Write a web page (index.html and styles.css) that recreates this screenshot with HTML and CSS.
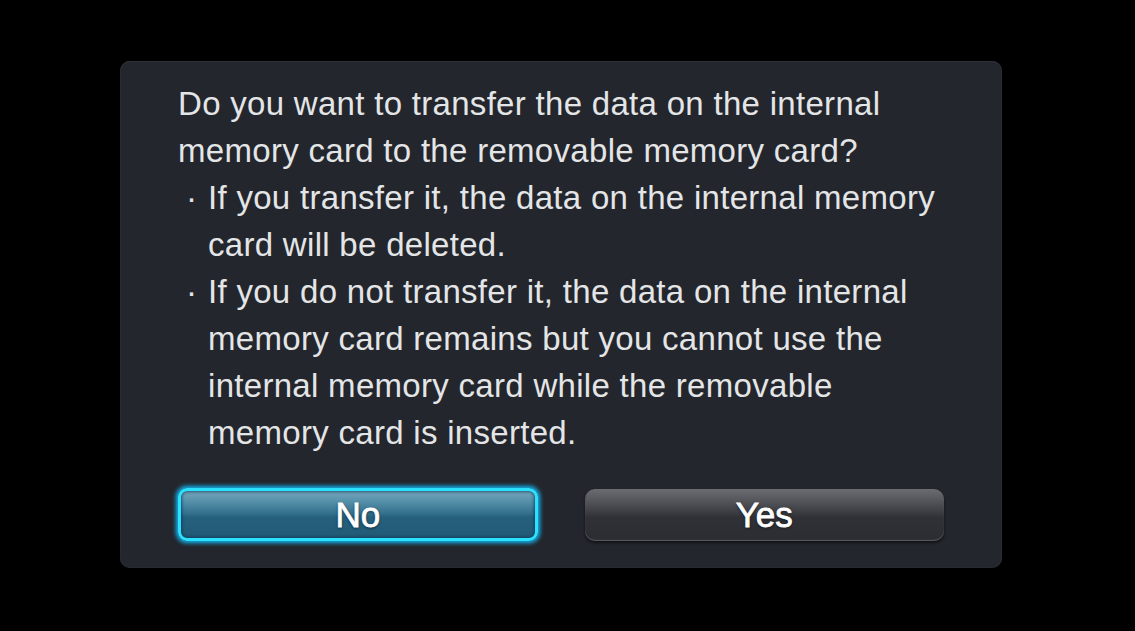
FILE: index.html
```html
<!DOCTYPE html>
<html lang="en">
<head>
<meta charset="utf-8">
<title>Transfer data</title>
<link rel="stylesheet" href="styles.css">
</head>
<body>
<div class="dialog">
  <div class="message">
    <p class="line">Do you want to transfer the data on the internal<br>memory card to the removable memory card?</p>
    <div class="bullet-row">
      <span class="bullet">·</span>
      <p class="line">If you transfer it, the data on the internal memory<br>card will be deleted.</p>
    </div>
    <div class="bullet-row">
      <span class="bullet">·</span>
      <p class="line">If you do not transfer it, the data on the internal<br>memory card remains but you cannot use the<br>internal memory card while the removable<br>memory card is inserted.</p>
    </div>
  </div>
  <div class="buttons">
    <button class="btn btn-focus">No</button>
    <button class="btn btn-normal">Yes</button>
  </div>
</div>
</body>
</html>
```

FILE: styles.css
```css
html, body {
  margin: 0;
  padding: 0;
  background: #000;
}
body {
  width: 1135px;
  height: 631px;
  padding: 61px 0 0 120px;
  box-sizing: border-box;
  font-family: "Liberation Sans", Arial, sans-serif;
}
.dialog {
  width: 882px;
  height: 507px;
  box-sizing: border-box;
  background: #23262c;
  border-radius: 10px;
  box-shadow: inset 0 1px 0 #2e3138, inset 0 0 0 1px #282b31;
  padding: 19px 58px 27px 58px;
  display: flex;
  flex-direction: column;
  justify-content: space-between;
}
.message {
  color: #e4e5e7;
  font-size: 33px;
  line-height: 47px;
  letter-spacing: 0.3px;
}
.line {
  margin: 0;
  white-space: nowrap;
}
.bullet-row {
  display: flex;
}
.bullet {
  width: 30px;
  padding-left: 8px;
  box-sizing: border-box;
  flex: none;
}
.buttons {
  display: grid;
  grid-template-columns: 1fr 1fr;
  gap: 47px;
}
.btn {
  height: 53px;
  font-family: "Liberation Sans", Arial, sans-serif;
  font-size: 35px;
  color: #fff;
  -webkit-text-stroke: 0.8px #fff;
  text-shadow: 0 1px 3px rgba(0,0,0,0.7);
  padding: 0;
  cursor: pointer;
}
.btn-focus {
  border: 3px solid #2ae2ff;
  border-radius: 9px;
  background: linear-gradient(to bottom, #75a7bd 0%, #5690a9 22%, #33708c 48%, #25607c 56%, #225a76 100%);
  box-shadow: 0 0 4px 2px #13b6f5, inset 0 0 3px 1px rgba(10,50,80,0.7);
}
.btn-normal {
  margin-top: 1px;
  height: 52px;
  border: none;
  border-radius: 10px;
  background: linear-gradient(to bottom, #6a6c71 0%, #56585d 20%, #3b3d42 45%, #2f3136 55%, #2b2d32 100%);
  box-shadow: 0 2px 3px rgba(0,0,0,0.55), inset 0 -1px 1px rgba(120,122,128,0.6);
}
```
